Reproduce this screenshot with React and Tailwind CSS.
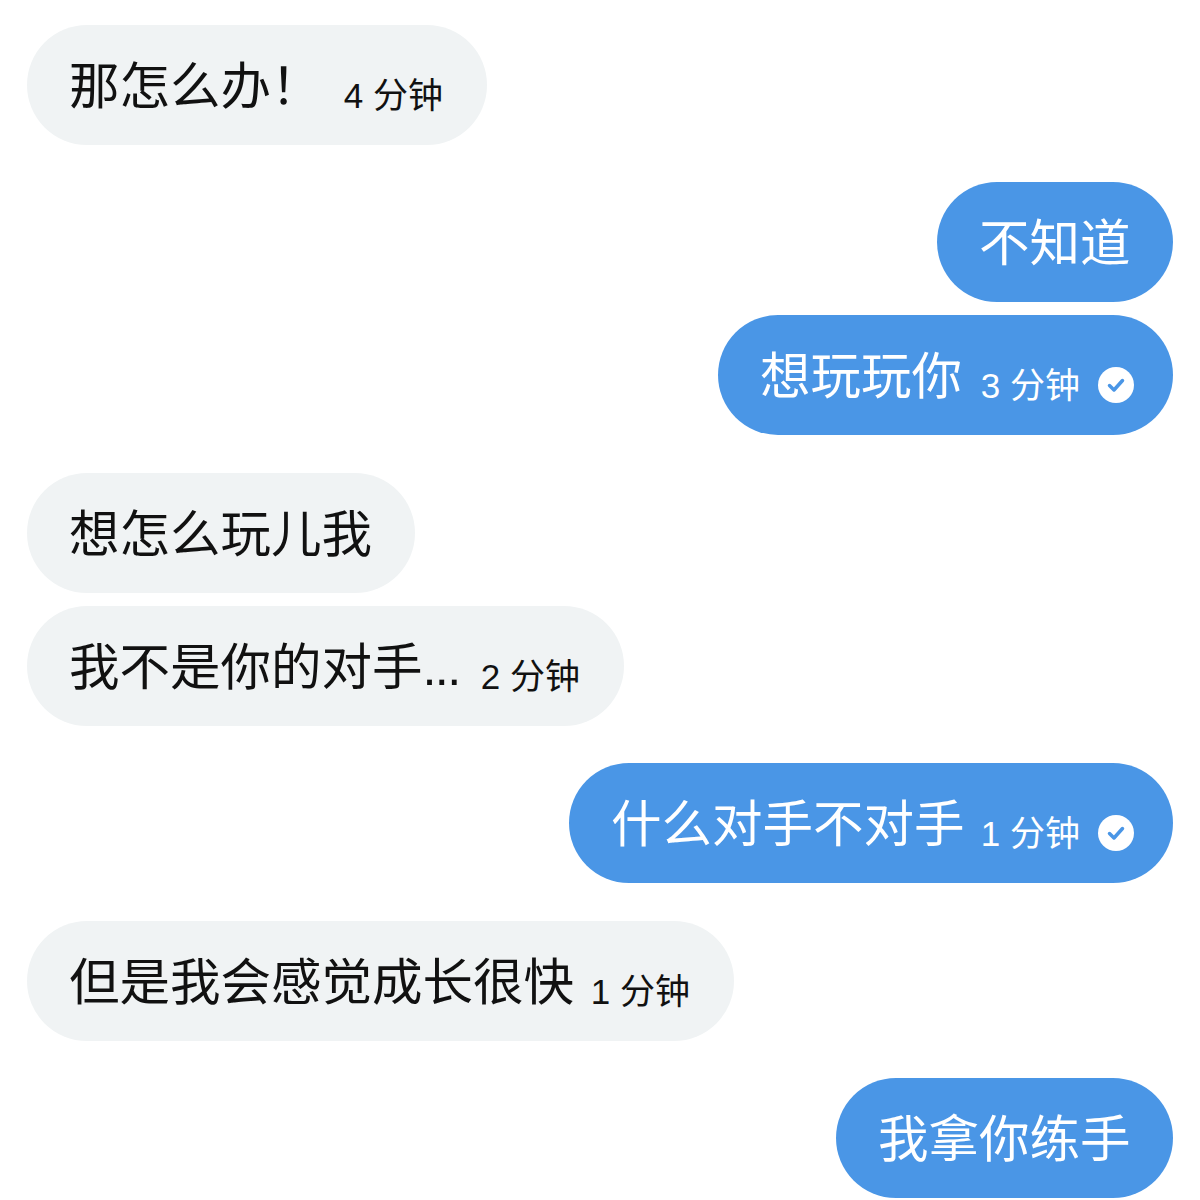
const font = { fontFamily: '"Liberation Sans", "Noto Sans CJK SC", sans-serif' }

const messages = [
  { side: 'in', text: '那怎么办！', time: '4', mt: 'mt-[25px]', w: 'w-[460px]' },
  { side: 'out', text: '不知道', mt: 'mt-[37px]', w: 'w-[236px]' },
  { side: 'out', text: '想玩玩你', time: '3', check: true, mt: 'mt-[13px]', w: 'w-[455px]' },
  { side: 'in', text: '想怎么玩儿我', mt: 'mt-[38px]', w: 'w-[388px]' },
  { side: 'in', text: '我不是你的对手', dots: true, time: '2', mt: 'mt-[13px]', w: 'w-[597px]' },
  { side: 'out', text: '什么对手不对手', time: '1', check: true, mt: 'mt-[37px]', w: 'w-[604px]' },
  { side: 'in', text: '但是我会感觉成长很快', time: '1', mt: 'mt-[38px]', w: 'w-[707px]' },
  { side: 'out', text: '我拿你练手', mt: 'mt-[37px]', w: 'w-[337px]' },
]

const Check = () => (
  <svg width="36" height="36" viewBox="0 0 36 36" className="shrink-0 ml-[18px] mt-[20px]">
    <circle cx="18" cy="18" r="18" fill="#ffffff" />
    <path d="M11.5 18.5l4.5 4.5 8.5-9.5" fill="none" stroke="#4a96e6" strokeWidth="3.5" strokeLinecap="round" strokeLinejoin="round" />
  </svg>
)

const Bubble = ({ m }) => {
  const out = m.side === 'out'
  return (
    <div className={`flex ${out ? 'justify-end' : 'justify-start'} ${m.mt}`}>
      <div className={`${m.w} h-[120px] rounded-[60px] flex items-center pl-[42px] ${m.check ? 'pr-[39px]' : 'pr-[44px]'} ${out ? 'bg-[#4a96e6] text-white' : 'bg-[#f0f3f4] text-[#111111]'}`}>
        <span className="text-[50.5px] leading-none whitespace-nowrap mt-[4px]">
          {m.text}
          {m.dots && <span className="tracking-[-1.7px]">...</span>}
        </span>
        {m.time && (
          <span className="ml-auto mt-[20px] text-[35px] leading-none whitespace-nowrap">{m.time} 分钟</span>
        )}
        {m.check && <Check />}
      </div>
    </div>
  )
}

export default function App() {
  return (
    <div className="w-[1200px] h-[1200px] overflow-hidden bg-white px-[27px]" style={font}>
      {messages.map((m, i) => (
        <Bubble key={i} m={m} />
      ))}
    </div>
  )
}
